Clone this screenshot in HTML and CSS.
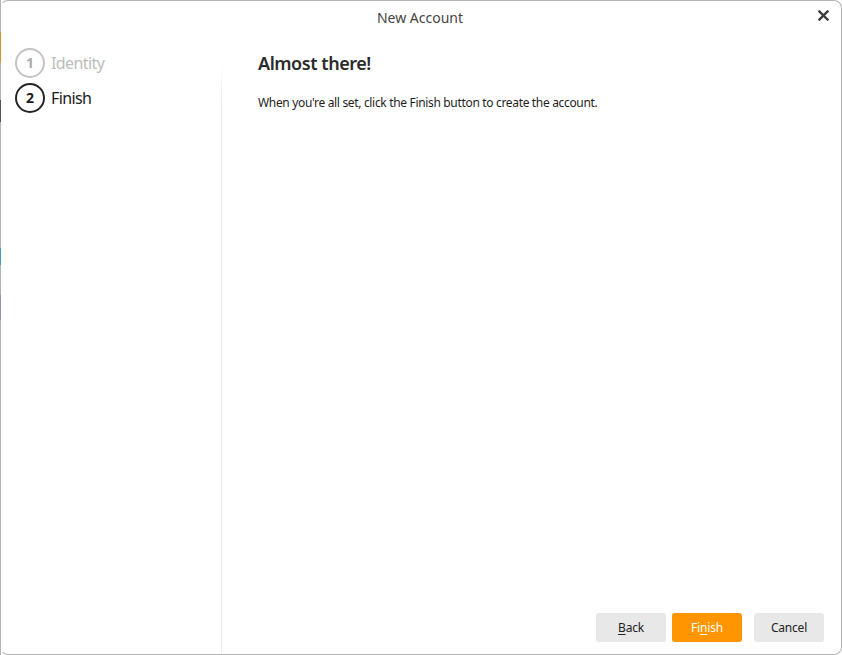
FILE: index.html
```html
<!DOCTYPE html>
<html>
<head>
<meta charset="utf-8">
<link rel="stylesheet" href="styles.css">
</head>
<body>
<div class="window">
  <div class="titlebar">
    <span class="title">New Account</span>
    <span class="close" aria-label="Close">
      <svg width="11" height="11" viewBox="0 0 11 11"><path d="M1.5 1.5 L9.5 9.5 M9.5 1.5 L1.5 9.5" stroke="#3c3c3c" stroke-width="2.4" stroke-linecap="square"/></svg>
    </span>
  </div>
  <div class="body">
    <aside class="sidebar">
      <div class="step step-done">
        <span class="num">1</span>
        <span class="label">Identity</span>
      </div>
      <div class="step step-current">
        <span class="num">2</span>
        <span class="label">Finish</span>
      </div>
    </aside>
    <main class="content">
      <div class="main-text">
        <h1>Almost there!</h1>
        <p>When you're all set, click the Finish button to create the account.</p>
      </div>
      <div class="buttons">
        <button class="btn"><u>B</u>ack</button>
        <button class="btn primary">Fi<u>n</u>ish</button>
        <button class="btn cancel">Cancel</button>
      </div>
    </main>
  </div>
</div>
</body>
</html>
```
FILE: styles.css
```css
* { box-sizing: border-box; }
html, body { margin: 0; padding: 0; }
body {
  width: 842px;
  height: 655px;
  font-family: "Noto Sans", "Open Sans", sans-serif;
  color: #222;
  background: #fff linear-gradient(to bottom,
    #b4b4b4 0, #b4b4b4 32px,
    #d9902a 32px, #d9902a 63px,
    #b4b4b4 63px, #b4b4b4 100px,
    #555 100px, #555 122px,
    #b4b4b4 122px, #b4b4b4 248px,
    #3aa0b0 248px, #3aa0b0 265px,
    #b4b4b4 265px, #b4b4b4 295px,
    #9a90c0 295px, #9a90c0 320px,
    #b4b4b4 320px) no-repeat 0 0 / 1px 655px;
}
.window {
  width: 842px;
  height: 655px;
  border: 1px solid #b4b4b4;
  border-left-color: transparent;
  border-radius: 8px;
  background: #fff padding-box;
  display: flex;
  flex-direction: column;
  overflow: hidden;
}
.titlebar {
  height: 32px;
  flex: none;
  display: flex;
  align-items: center;
  justify-content: center;
  position: relative;
}
.title {
  font-size: 14px;
  color: #444;
  margin-left: -2px;
}
.close {
  position: absolute;
  right: 12px;
  top: 9px;
  width: 11px;
  height: 11px;
  display: flex;
}
.body {
  flex: 1;
  display: flex;
  min-height: 0;
}
.sidebar {
  width: 221px;
  flex: none;
  padding: 15px 0 0 14px;
  display: flex;
  flex-direction: column;
  gap: 6px;
  background: linear-gradient(to bottom, rgba(237,237,237,0) 0, rgba(237,237,237,0) 25px, #ededed 70px, #ededed 100%) no-repeat right top / 1px 100%;
}
.step {
  display: flex;
  align-items: center;
  height: 29px;
  gap: 6px;
}
.num {
  width: 30px;
  height: 30px;
  border-radius: 50%;
  border: 2px solid #c4c4c4;
  display: flex;
  align-items: center;
  justify-content: center;
  font-size: 14px;
  font-weight: 700;
  color: #ababab;
}
.label {
  font-size: 16px;
  letter-spacing: -0.6px;
  color: #bdbdbd;
}
.step-current .num {
  border-color: #252525;
  color: #1c1c1c;
}
.step-current .label {
  color: #202020;
}
.content {
  flex: 1;
  display: flex;
  flex-direction: column;
  justify-content: space-between;
  padding: 18px 17px 12px 36px;
}
h1 {
  margin: 0;
  font-size: 18px;
  font-weight: 600;
  letter-spacing: -0.45px;
  color: #2b2b2b;
  line-height: 24px;
}
p {
  margin: 20px 0 0 0;
  font-size: 12px;
  line-height: 16px;
  letter-spacing: -0.33px;
  color: #1e1e1e;
}
.buttons {
  display: flex;
  justify-content: flex-end;
  gap: 6px;
}
.btn {
  width: 70px;
  height: 29px;
  border: none;
  border-radius: 3px;
  background: #e8e8e8;
  font-family: inherit;
  font-size: 12px;
  letter-spacing: -0.2px;
  color: #222;
  padding: 0;
}
.btn.primary {
  background: #ff9500;
  color: #fff;
}
.btn.cancel {
  margin-left: 6px;
}
u { text-decoration-thickness: 1px; text-underline-offset: 2px; }
```
